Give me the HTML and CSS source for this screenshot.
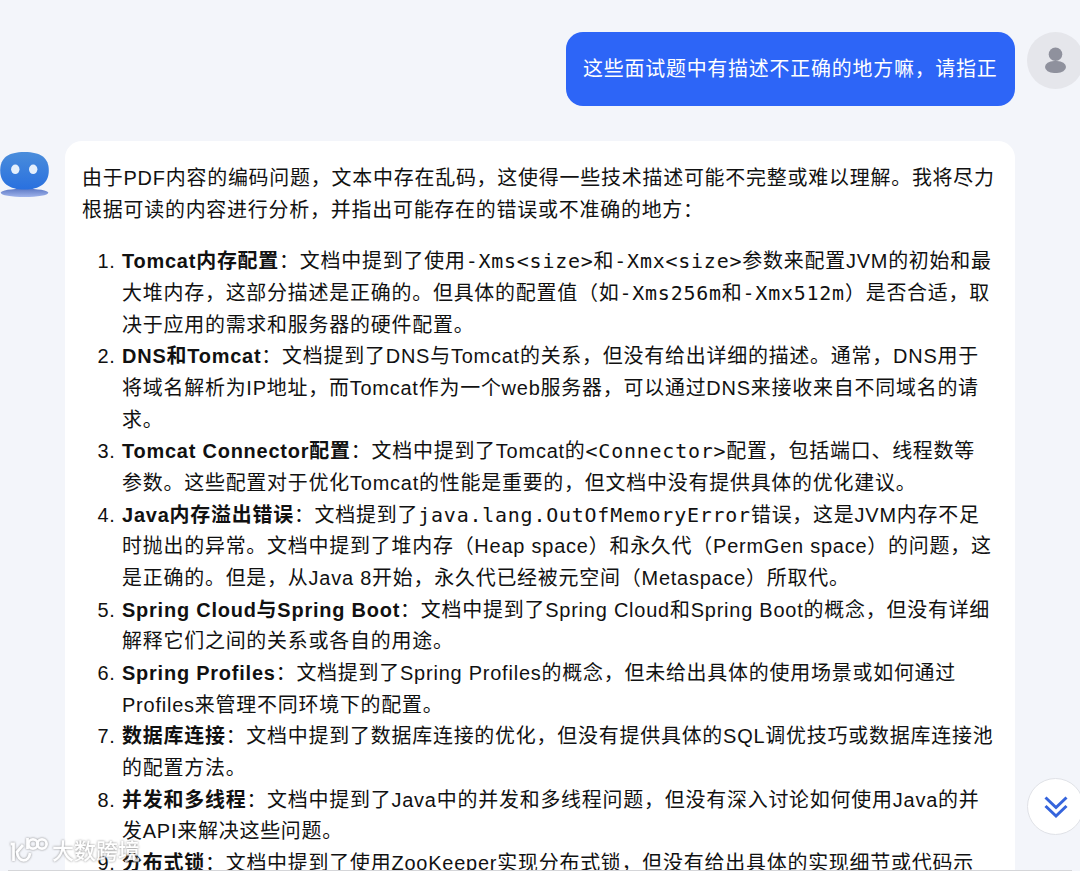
FILE: index.html
```
<!DOCTYPE html>
<html lang="zh-CN">
<head>
  <meta charset="UTF-8">
  <meta name="viewport" content="width=device-width, initial-scale=1.0">
  <title>AI 文档问答</title>
  <link rel="stylesheet" href="styles.css">
</head>
<body>
  <div class="chat">
    <!-- 用户消息 -->
    <div class="message user">
      <div class="bubble">这些面试题中有描述不正确的地方嘛，请指正</div>
      <div class="avatar">
        <svg width="57" height="57" viewBox="0 0 57 57">
          <circle cx="28.5" cy="22.3" r="6.8" fill="#8f919d"/>
          <rect x="18" y="29" width="21" height="12" rx="9" ry="6" fill="#8f919d"/>
        </svg>
      </div>
    </div>

    <!-- 机器人回复 -->
    <div class="message bot">
      <svg class="robot" width="49" height="46" viewBox="0 0 49 46">
        <defs>
          <linearGradient id="face" x1="0" y1="0" x2="0" y2="1">
            <stop offset="0" stop-color="#4a8ddb"/>
            <stop offset="1" stop-color="#2970df"/>
          </linearGradient>
          <linearGradient id="base" x1="0" y1="0" x2="0" y2="1">
            <stop offset="0" stop-color="#5c78c4"/>
            <stop offset="1" stop-color="#a0b4ec"/>
          </linearGradient>
        </defs>
        <ellipse cx="24.5" cy="40.8" rx="23.8" ry="4.2" fill="url(#base)"/>
        <path d="M24.5 0C41 0 48.8 6 48.8 18.5C48.8 31 40 37.6 24.5 37.6C9 37.6 0.2 31 0.2 18.5C0.2 6 8 0 24.5 0Z" fill="url(#face)"/>
        <ellipse cx="15.3" cy="17.3" rx="4.2" ry="4.8" fill="#e4effc"/>
        <ellipse cx="33.2" cy="17.3" rx="4.2" ry="4.8" fill="#e4effc"/>
      </svg>
      <div class="answer">
        <p>由于PDF内容的编码问题，文本中存在乱码，这使得一些技术描述可能不完整或难以理解。我将尽力<br>根据可读的内容进行分析，并指出可能存在的错误或不准确的地方：</p>
        <ol>
          <li><strong>Tomcat内存配置</strong>：文档中提到了使用<code>-Xms&lt;size&gt;</code>和<code>-Xmx&lt;size&gt;</code>参数来配置JVM的初始和最<br>大堆内存，这部分描述是正确的。但具体的配置值（如<code>-Xms256m</code>和<code>-Xmx512m</code>）是否合适，取<br>决于应用的需求和服务器的硬件配置。</li>
          <li><strong>DNS和Tomcat</strong>：文档提到了DNS与Tomcat的关系，但没有给出详细的描述。通常，DNS用于<br>将域名解析为IP地址，而Tomcat作为一个web服务器，可以通过DNS来接收来自不同域名的请<br>求。</li>
          <li><strong>Tomcat Connector配置</strong>：文档中提到了Tomcat的<code>&lt;Connector&gt;</code>配置，包括端口、线程数等<br>参数。这些配置对于优化Tomcat的性能是重要的，但文档中没有提供具体的优化建议。</li>
          <li><strong>Java内存溢出错误</strong>：文档提到了<code>java.lang.OutOfMemoryError</code>错误，这是JVM内存不足<br>时抛出的异常。文档中提到了堆内存（Heap space）和永久代（PermGen space）的问题，这<br>是正确的。但是，从Java 8开始，永久代已经被元空间（Metaspace）所取代。</li>
          <li><strong>Spring Cloud与Spring Boot</strong>：文档中提到了Spring Cloud和Spring Boot的概念，但没有详细<br>解释它们之间的关系或各自的用途。</li>
          <li><strong>Spring Profiles</strong>：文档提到了Spring Profiles的概念，但未给出具体的使用场景或如何通过<br>Profiles来管理不同环境下的配置。</li>
          <li><strong>数据库连接</strong>：文档中提到了数据库连接的优化，但没有提供具体的SQL调优技巧或数据库连接池<br>的配置方法。</li>
          <li><strong>并发和多线程</strong>：文档中提到了Java中的并发和多线程问题，但没有深入讨论如何使用Java的并<br>发API来解决这些问题。</li>
          <li><strong>分布式锁</strong>：文档中提到了使用ZooKeeper实现分布式锁，但没有给出具体的实现细节或代码示</li>
        </ol>
      </div>
    </div>
  </div>

  <!-- 滚动到底部按钮 -->
  <div class="scroll-down">
    <svg width="24" height="24" viewBox="0 0 24 24" fill="none" stroke="#3564dc" stroke-width="3">
      <path d="M1.5 2.5L12 12.5L22.5 2.5M1.5 11L12 21L22.5 11"/>
    </svg>
  </div>

  <!-- 水印 -->
  <div class="watermark">
    <svg width="40" height="30" viewBox="0 0 40 30" fill="none" stroke="#fff" stroke-width="2.8">
      <path d="M1.5 8H4.5V25M14 9L8 16C9 27 20 27 21 17M18.5 2V13"/>
      <circle cx="24" cy="8" r="4.6"/>
      <circle cx="33" cy="8" r="4.6"/>
    </svg>
    <span>大数跨境</span>
  </div>
  <div class="bottom-line"></div>
</body>
</html>
```

FILE: styles.css
```
/* 基本页面布局 */
body {
  margin: 0;
  height: 871px;
  overflow: hidden;
  background-color: #f3f5fa;
  color: #111;
  font-family: "Liberation Sans", "Noto Sans CJK SC", sans-serif;
  font-size: 19.95px;
  line-height: 31.67px;
  letter-spacing: 0.79px;
}

.chat {
  display: flex;
  flex-direction: column;
  box-sizing: border-box;
  width: 1084px;
  height: 871px;
  padding-top: 32px;
}

.message {
  display: flex;
  align-items: flex-start;
}

/* 用户消息 */
.message.user {
  justify-content: flex-end;
  gap: 12px;
}

.user .bubble {
  box-sizing: border-box;
  width: 449px;
  height: 74px;
  padding: 22px 17px 20px;
  border-radius: 17px;
  background-color: #2d65f7;
  color: #fff;
  white-space: nowrap;
}

.avatar {
  width: 57px;
  height: 57px;
  border-radius: 50%;
  background-color: #e5e6eb;
}

.avatar svg {
  display: block;
}

/* 机器人消息 */
.message.bot {
  flex: 1;
  min-height: 0;
  align-items: stretch;
  margin-top: 35px;
  gap: 16px;
}

.robot {
  flex: none;
  margin-top: 11px;
}

.answer {
  box-sizing: border-box;
  width: 950px;
  padding: 22px 17px 0;
  border-radius: 17px 17px 0 0;
  background-color: #fff;
  white-space: nowrap;
  overflow: hidden;
}

.answer p {
  margin: 0 0 20px;
}

.answer ol {
  margin: 0;
  padding-left: 40px;
}

.answer code {
  font-family: "DejaVu Sans Mono", monospace;
  font-size: 19.95px;
  line-height: 1;
}

/* 滚动按钮 */
.scroll-down {
  position: fixed;
  top: 778px;
  left: 1027px;
  display: flex;
  justify-content: center;
  align-items: center;
  box-sizing: border-box;
  width: 57px;
  height: 57px;
  border: 1px solid #dfe1e6;
  border-radius: 50%;
  background-color: #fff;
}

/* 水印 */
.watermark {
  position: fixed;
  left: 9px;
  top: 836px;
  display: flex;
  gap: 3px;
  color: #fff;
  font-size: 22px;
  font-weight: 500;
  letter-spacing: 0;
  opacity: 0.85;
  filter: drop-shadow(0 0 1px #777);
}

.bottom-line {
  position: fixed;
  left: 8px;
  right: 8px;
  bottom: 0;
  height: 1px;
  background-color: #d5d6d9;
}
```
